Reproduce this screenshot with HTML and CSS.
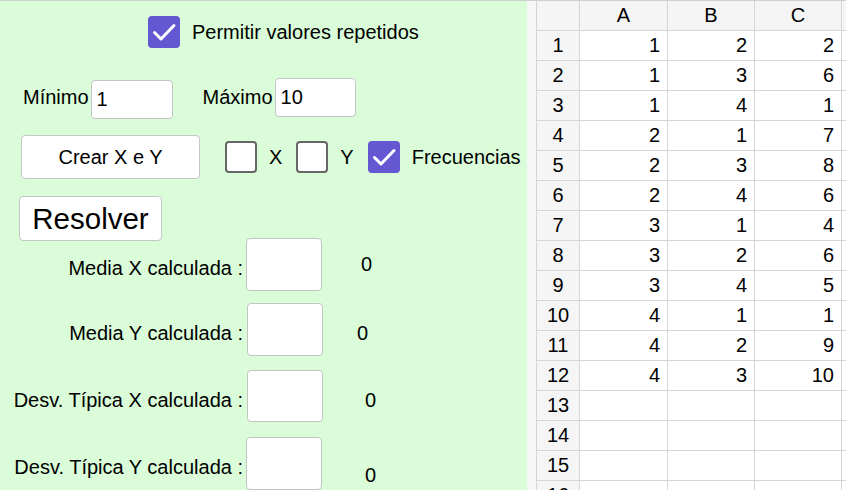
FILE: index.html
```html
<!DOCTYPE html>
<html lang="es">
<head>
<meta charset="utf-8">
<title>Media y desviación</title>
<link rel="stylesheet" href="styles.css">
</head>
<body>
<div class="app">
  <div class="panel">
    <div class="row row-repeat">
      <span class="cb cb-on"><svg viewBox="0 0 32 32" width="32" height="32"><rect x="0" y="0" width="32" height="32" rx="4" fill="#6557d2"/><path d="M6.5 16.5 L13 23 L26 9.5" fill="none" stroke="#fff" stroke-width="3" stroke-linecap="round" stroke-linejoin="round"/></svg></span>
      <span class="lbl">Permitir valores repetidos</span>
    </div>
    <div class="row row-range">
      <span class="lbl">Mínimo</span><span class="field field-min">1</span>
      <span class="lbl lbl-max">Máximo</span><span class="field field-max">10</span>
    </div>
    <div class="row row-create">
      <button class="btn btn-create">Crear X e Y</button>
      <span class="opt opt-x"><span class="cb cb-off"></span><span class="lbl">X</span></span>
      <span class="opt"><span class="cb cb-off"></span><span class="lbl">Y</span></span>
      <span class="opt"><span class="cb cb-on"><svg viewBox="0 0 32 32" width="32" height="32"><rect x="0" y="0" width="32" height="32" rx="4" fill="#6557d2"/><path d="M6.5 16.5 L13 23 L26 9.5" fill="none" stroke="#fff" stroke-width="3" stroke-linecap="round" stroke-linejoin="round"/></svg></span><span class="lbl">Frecuencias</span></span>
    </div>
    <div class="row row-solve">
      <button class="btn btn-solve">Resolver</button>
    </div>
    <div class="row stat stat-1"><span class="stat-lbl">Media X calculada :</span><span class="box"></span><span class="val">0</span></div>
    <div class="row stat stat-2"><span class="stat-lbl">Media Y calculada :</span><span class="box"></span><span class="val">0</span></div>
    <div class="row stat stat-3"><span class="stat-lbl">Desv. Típica X calculada :</span><span class="box"></span><span class="val">0</span></div>
    <div class="row stat stat-4"><span class="stat-lbl">Desv. Típica Y calculada :</span><span class="box"></span><span class="val">0</span></div>
  </div>
  <div class="strip"></div>
  <div class="sheet">
    <div class="hd"></div><div class="hd">A</div><div class="hd">B</div><div class="hd">C</div><div class="hd end"></div>
    <div class="rh">1</div><div class="c">1</div><div class="c">2</div><div class="c">2</div><div class="c end"></div>
    <div class="rh">2</div><div class="c">1</div><div class="c">3</div><div class="c">6</div><div class="c end"></div>
    <div class="rh">3</div><div class="c">1</div><div class="c">4</div><div class="c">1</div><div class="c end"></div>
    <div class="rh">4</div><div class="c">2</div><div class="c">1</div><div class="c">7</div><div class="c end"></div>
    <div class="rh">5</div><div class="c">2</div><div class="c">3</div><div class="c">8</div><div class="c end"></div>
    <div class="rh">6</div><div class="c">2</div><div class="c">4</div><div class="c">6</div><div class="c end"></div>
    <div class="rh">7</div><div class="c">3</div><div class="c">1</div><div class="c">4</div><div class="c end"></div>
    <div class="rh">8</div><div class="c">3</div><div class="c">2</div><div class="c">6</div><div class="c end"></div>
    <div class="rh">9</div><div class="c">3</div><div class="c">4</div><div class="c">5</div><div class="c end"></div>
    <div class="rh">10</div><div class="c">4</div><div class="c">1</div><div class="c">1</div><div class="c end"></div>
    <div class="rh">11</div><div class="c">4</div><div class="c">2</div><div class="c">9</div><div class="c end"></div>
    <div class="rh">12</div><div class="c">4</div><div class="c">3</div><div class="c">10</div><div class="c end"></div>
    <div class="rh">13</div><div class="c"></div><div class="c"></div><div class="c"></div><div class="c end"></div>
    <div class="rh">14</div><div class="c"></div><div class="c"></div><div class="c"></div><div class="c end"></div>
    <div class="rh">15</div><div class="c"></div><div class="c"></div><div class="c"></div><div class="c end"></div>
    <div class="rh">16</div><div class="c"></div><div class="c"></div><div class="c"></div><div class="c end"></div>
  </div>
</div>
</body>
</html>
```

FILE: styles.css
```css
* { box-sizing: border-box; }
html, body { margin: 0; padding: 0; }
body {
  font-family: "Liberation Sans", Arial, sans-serif;
  font-size: 20px;
  color: #000;
  background: #fff;
  width: 846px;
  height: 490px;
  overflow: hidden;
}
.app {
  display: flex;
  height: 490px;
  border-top: 1px solid #cfcfcf;
  overflow: hidden;
}
.panel {
  width: 527px;
  flex: none;
  background: #dafcd9;
  display: flex;
  flex-direction: column;
  overflow: hidden;
}
.row { display: flex; align-items: center; flex: none; white-space: nowrap; }
.lbl { line-height: 1.15; }

.cb { width: 32px; height: 32px; flex: none; display: block; }
.cb svg { display: block; }
.cb-off { background: #fff; border: 2.5px solid #666; border-radius: 4px; }

.row-repeat { height: 32px; margin-top: 15px; padding-left: 148px; gap: 12px; }

.row-range { height: 41px; margin-top: 29px; padding-left: 23px; }
.field {
  background: #fff;
  border: 1px solid #c4c4c4;
  border-radius: 4px;
  height: 39px;
  display: flex;
  align-items: center;
  padding-left: 5px;
  margin-left: 2px;
}
.field-min { width: 82px; margin-top: 3px; }
.field-max { width: 81px; }
.lbl-max { margin-left: 30px; }

.row-create { height: 44px; margin-top: 17px; padding-left: 21px; }
.btn {
  font-family: inherit;
  color: #000;
  background: #fff;
  border: 1px solid #c6c6c6;
  border-radius: 4px;
  padding: 0;
  margin: 0;
}
.btn-create { width: 179px; height: 44px; font-size: 20px; }
.opt { display: flex; align-items: center; gap: 12px; margin-left: 14px; }
.opt-x { margin-left: 25px; }

.row-solve { height: 45px; margin-top: 17px; padding-left: 19px; }
.btn-solve { width: 143px; height: 45px; font-size: 29.5px; }

.stat { height: 53px; }
.stat-lbl { width: 243px; flex: none; text-align: right; margin-top: 8px; }
.box {
  width: 76px;
  height: 100%;
  flex: none;
  margin-left: 3px;
  background: #fff;
  border: 1px solid #c4c4c4;
  border-radius: 4px;
}
.stat-1 { margin-top: -3px; }
.stat-1 .val { margin-left: 39px; margin-top: -1px; }
.stat-2 { margin-top: 12px; }
.stat-2 .box { margin-left: 4px; }
.stat-2 .val { margin-left: 34px; margin-top: 7px; }
.stat-3 { margin-top: 14px; height: 52px; }
.stat-3 .box { margin-left: 4px; }
.stat-3 .val { margin-left: 42px; margin-top: 8px; }
.stat-4 { margin-top: 15px; }
.stat-4 .val { margin-left: 43px; margin-top: 23px; }

.strip {
  width: 10px;
  flex: none;
  background: #f7f7f7;
  border-right: 1px solid #d4d4d4;
}
.sheet {
  flex: 1;
  display: grid;
  grid-template-columns: 43px 88px 87px 87px 1fr;
  grid-auto-rows: 30px;
  align-content: start;
}
.hd, .rh, .c {
  border-right: 1px solid #d6d6d6;
  border-bottom: 1px solid #d6d6d6;
  line-height: 29px;
  overflow: hidden;
}
.hd { background: #f5f5f5; text-align: center; }
.rh { background: #f5f5f5; text-align: center; }
.c { background: #fff; text-align: right; padding-right: 7px; }
.end { border-right: none; }
.hd.end { background: #f5f5f5; }
```
